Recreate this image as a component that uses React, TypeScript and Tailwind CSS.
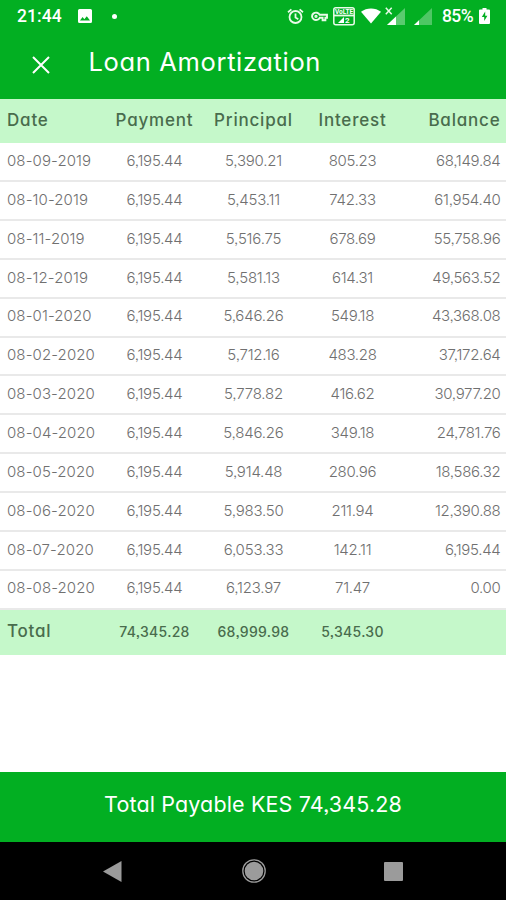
import React from "react";

const rows: string[][] = [
  ["08-09-2019", "6,195.44", "5,390.21", "805.23", "68,149.84"],
  ["08-10-2019", "6,195.44", "5,453.11", "742.33", "61,954.40"],
  ["08-11-2019", "6,195.44", "5,516.75", "678.69", "55,758.96"],
  ["08-12-2019", "6,195.44", "5,581.13", "614.31", "49,563.52"],
  ["08-01-2020", "6,195.44", "5,646.26", "549.18", "43,368.08"],
  ["08-02-2020", "6,195.44", "5,712.16", "483.28", "37,172.64"],
  ["08-03-2020", "6,195.44", "5,778.82", "416.62", "30,977.20"],
  ["08-04-2020", "6,195.44", "5,846.26", "349.18", "24,781.76"],
  ["08-05-2020", "6,195.44", "5,914.48", "280.96", "18,586.32"],
  ["08-06-2020", "6,195.44", "5,983.50", "211.94", "12,390.88"],
  ["08-07-2020", "6,195.44", "6,053.33", "142.11", "6,195.44"],
  ["08-08-2020", "6,195.44", "6,123.97", "71.47", "0.00"],
];

const grid = "grid grid-cols-[98px_99px_99px_99px_1fr] items-center pl-[7px] pr-[5.5px]";
const align = ["text-left", "text-center", "text-center", "text-center", "text-right"];
const spacing = ["tracking-[0.1px]", "tracking-[-0.25px]", "tracking-[-0.2px]", "tracking-[-0.3px]", "tracking-[-0.3px]"];

function StatusBar() {
  return (
    <div className="flex h-8 shrink-0 items-center pl-[17px] font-[Roboto,sans-serif] text-[17.5px] font-medium">
      <span className="w-[61px] whitespace-nowrap tracking-[0.1px]">21:44</span>
      <svg width="14" height="14" viewBox="0 0 14 14" className="block">
        <path fillRule="evenodd" fill="#fff" d="M1.5 0h11A1.5 1.5 0 0 1 14 1.5v11a1.5 1.5 0 0 1-1.5 1.5h-11A1.5 1.5 0 0 1 0 12.5v-11A1.5 1.5 0 0 1 1.5 0ZM2 11.5h10L8.8 7.2 6.3 10.200 4.600 8.100Z" />
      </svg>
      <span className="ml-[20px] size-[5px] rounded-full bg-white" />
      <div className="ml-auto flex items-center">
        <svg width="17" height="17" viewBox="0 0 17 17" fill="none" stroke="#e9fbe9" strokeWidth="1.8" className="mr-[7px]">
          <circle cx="8.500" cy="9" r="6" />
          <path d="M1 4.200 4.400 1.400M16 4.200l-3.400-2.800M8.500 5.500v4l2.800 1.700" />
        </svg>
        <svg width="17" height="11" viewBox="0 0 17 11" fill="none" stroke="#e9fbe9" strokeWidth="1.9" className="mr-[5px]">
          <path d="M8.700 3.800H16v3h-1.600v2.400h-2.800V6.800H8.700A4 3.700 0 1 1 8.700 3.800Z" />
          <circle cx="5" cy="5.300" r=".7" />
        </svg>
        <svg width="22" height="19" viewBox="0 0 22 19" className="mr-[6px]">
          <rect x=".8" y=".8" width="20.400" height="17" rx="2" fill="none" stroke="#e9fbe9" strokeWidth="1.500" />
          <path d="M1 8.500h20" stroke="#e9fbe9" strokeWidth="1.800" />
          <path d="M5 16l6-6v6Z" fill="#fff" />
          <text x="11" y="7" textAnchor="middle" fontSize="6.500" fontWeight="700" fill="#fff">VoLTE</text>
          <text x="12" y="16.200" fontSize="8" fontWeight="700" fill="#fff">2</text>
        </svg>
        <svg width="20" height="16" viewBox="0 0 20 16" className="mr-[4px]">
          <path d="M0 3.800C5.500-.7 14.500-.7 20 3.800L10 15.500Z" fill="#fff" />
        </svg>
        <svg width="21" height="19" viewBox="0 0 21 19" className="mr-[8px]">
          <path d="M2 18 20 1v17Z" fill="#fff" opacity=".35" />
          <path d="M2 18 11 9.500V18Z" fill="#fff" />
          <path d="M.8 .8 6.700 7.200M6.700 .8 .8 7.200" stroke="#e9fbe9" strokeWidth="1.500" />
        </svg>
        <svg width="19" height="17" viewBox="0 0 19 17" className="mr-[9px]">
          <path d="M0 17 18 0v17Z" fill="#fff" opacity=".3" />
          <path d="M0 17l5-4.700V17Z" fill="#fff" />
        </svg>
        <span className="w-[37px] whitespace-nowrap tracking-[-0.6px]">85%</span>
        <svg width="11" height="16" viewBox="0 0 11 16" className="mr-[16px]">
          <path d="M3.500 0h4v1.600H10q1 0 1 1V15q0 1-1 1H1q-1 0-1-1V2.600q0-1 1-1h2.500Z" fill="#fff" />
          <path d="M6.200 3.500 2.800 9h2.400v4L8.400 7.700H6.200Z" fill="#02af22" />
        </svg>
      </div>
    </div>
  );
}

export default function App() {
  return (
    <div className="flex h-[900px] w-[506px] flex-col overflow-hidden bg-white font-[Inter,'Open_Sans',sans-serif] [font-feature-settings:'cv11','ss03']">
      <header className="flex h-[99px] shrink-0 flex-col bg-[#02af22] text-white">
        <StatusBar />
        <div className="flex h-[62px] items-center pl-8">
          <svg width="18" height="18" viewBox="0 0 18 18" stroke="#fff" strokeWidth="2" className="mt-[3px]">
            <path d="M1 1l16 16M17 1 1 17" />
          </svg>
          <h1 className="ml-[38.5px] whitespace-nowrap pb-[2px] text-[25.5px] leading-8 tracking-[0.65px]">Loan Amortization</h1>
        </div>
      </header>

      <div className={grid + " h-[44.4px] shrink-0 bg-[#c5f8ca] text-[17px] font-medium text-[#496c4d]"}>
        {["Date", "Payment", "Principal", "Interest", "Balance"].map((label, i) => (
          <span key={label} className={align[i] + " whitespace-nowrap pb-px tracking-[0.8px]"}>{label}</span>
        ))}
      </div>
      {rows.map((row) => (
        <div key={row[0]} className={grid + " h-[38.85px] shrink-0 border-b-2 border-[#e9e9e9] text-[15px] font-light text-[#707070]"}>
          {row.map((value, i) => (
            <span key={i} className={align[i] + " whitespace-nowrap pb-px " + spacing[i]}>{value}</span>
          ))}
        </div>
      ))}
      <div className={grid + " h-[45px] shrink-0 bg-[#c5f8ca] font-medium text-[#496c4d]"}>
        <span className="pb-px text-[17px] tracking-[0.75px]">Total</span>
        {["74,345.28", "68,999.98", "5,345.30"].map((value) => (
          <span key={value} className="whitespace-nowrap pb-[2px] text-center text-[14px] tracking-[0.3px]">{value}</span>
        ))}
      </div>

      <footer className="mt-auto shrink-0">
        <div className="flex h-[70px] items-center justify-center bg-[#02af22] pb-[5px] text-[21.5px] tracking-[0.14px] whitespace-nowrap text-white">
          Total Payable KES 74,345.28
        </div>
        <nav className="flex h-[58px] items-center bg-black pl-[103px]">
          <svg width="19" height="21" viewBox="0 0 19 21"><path d="M0 10.500 18.500 0v21Z" fill="#9b9b9b" /></svg>
          <svg width="24" height="24" viewBox="0 0 24 24" className="ml-[120px]">
            <circle cx="12" cy="12" r="11.200" fill="none" stroke="#9b9b9b" strokeWidth="1.300" />
            <circle cx="12" cy="12" r="9.300" fill="#9b9b9b" />
          </svg>
          <span className="ml-[118px] size-[19px] rounded-[1px] bg-[#9b9b9b]" />
        </nav>
      </footer>
    </div>
  );
}
